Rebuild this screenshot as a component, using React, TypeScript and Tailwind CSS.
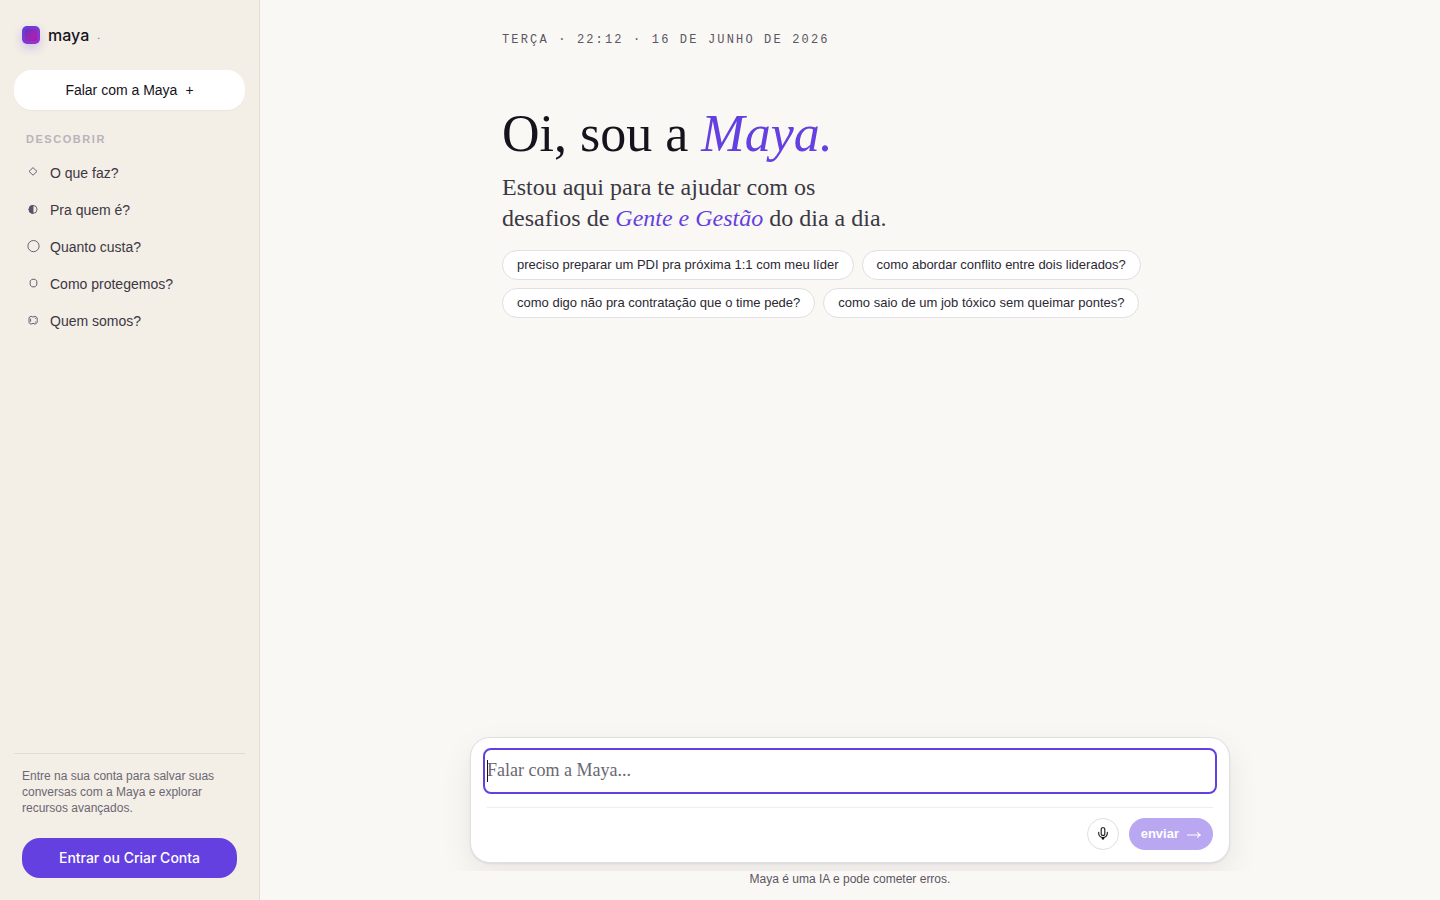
import React, { useState } from 'react';

const topics = [
  { icon: 'diamond', label: 'O que faz?' },
  { icon: 'half', label: 'Pra quem é?' },
  { icon: 'circle', label: 'Quanto custa?' },
  { icon: 'octagon', label: 'Como protegemos?' },
  { icon: 'benzene', label: 'Quem somos?' },
];

const suggestions = [
  'preciso preparar um PDI pra próxima 1:1 com meu líder',
  'como abordar conflito entre dois liderados?',
  'como digo não pra contratação que o time pede?',
  'como saio de um job tóxico sem queimar pontes?',
];

function TopicIcon({ name }: { name: string }) {
  return (
    <svg className="w-3.5 h-3.5 shrink-0 text-[#57536a]" viewBox="0 0 14 14" fill="none" stroke="currentColor" strokeWidth="0.9" aria-hidden="true">
      {name === 'diamond' && <path d="M7 1.6l4 3.8-4 3.8-4-3.8z" />}
      {name === 'half' && (
        <>
          <circle cx="7" cy="6.4" r="4" />
          <path d="M7 2.4a4 4 0 0 0 0 8z" fill="currentColor" />
        </>
      )}
      {name === 'circle' && <circle cx="7.5" cy="6.1" r="5.6" />}
      {name === 'octagon' && <path d="M5.9 2.3h3.2l1.7 1.7v4L9.1 9.8H5.9L4.2 8V4z" />}
      {name === 'benzene' && (
        <>
          <path d="M5 2.2l-2 1.4v5.2l2 1.4 2-.9 2 .9 2.2-1.6V3.8L9 2.2l-2 .9z" />
          <path d="M4.6 4.6v3.2M8.8 3.9l1 .7M8.8 8.5l1-.7" />
        </>
      )}
    </svg>
  );
}

function Sidebar() {
  return (
    <aside className="w-65 shrink-0 flex flex-col bg-[#f3eee6] border-r border-[#e0ddd8] px-3.5 pt-[23px] pb-5.5">
      <div className="flex items-center gap-2 px-2 h-6">
        <span className="w-4.5 h-4.5 p-0.75 rounded-[5px] bg-linear-135 from-[#5b3fd6] to-[#9a2fd0] shadow-[0_4px_10px_rgba(100,64,224,0.25)]">
          <span className="block w-full h-full rounded-[3px] bg-linear-135 from-[#6a2cc0] to-[#c000a8]"></span>
        </span>
        <span className="font-[Inter,sans-serif] text-base font-medium text-[#15131c]">maya</span>
        <span className="text-[10px] text-[#6440e0]">.</span>
      </div>

      <button
        type="button"
        className="mt-[23px] h-10 flex items-center justify-center gap-2 rounded-[18px] bg-white text-sm text-[#15131c] shadow-[0_1px_1px_rgba(0,0,0,0.04)] cursor-pointer"
      >
        <span>Falar com a Maya</span>
        <span>+</span>
      </button>

      <h2 className="mt-[21px] px-3 text-[11px] leading-4 font-semibold tracking-[0.14em] text-[#b9b3bb]">DESCOBRIR</h2>
      <nav className="mt-[7px]">
        <ul>
          {topics.map(topic => (
            <li key={topic.label}>
              <a href="#" className="flex items-center gap-2.5 h-[37px] px-3 text-sm text-[#3b3844]">
                <TopicIcon name={topic.icon} />
                <span>{topic.label}</span>
              </a>
            </li>
          ))}
        </ul>
      </nav>

      <div className="mt-auto pt-3.5 px-2 border-t border-[#e0ddd8]">
        <p className="text-xs leading-4 text-[#6b6774]">
          Entre na sua conta para salvar suas conversas com a Maya e explorar recursos avançados.
        </p>
        <button
          type="button"
          className="mt-5.5 w-full h-10 rounded-[18px] bg-[#6440e0] font-[Inter,sans-serif] text-sm font-medium text-white cursor-pointer"
        >
          Entrar ou Criar Conta
        </button>
      </div>
    </aside>
  );
}

function Composer() {
  const [message, setMessage] = useState('');

  return (
    <form
      onSubmit={e => e.preventDefault()}
      className="px-4 pt-3.5 pb-3 rounded-[20px] bg-white border border-[#e0dfe1] shadow-[0_1px_2px_rgba(20,16,30,0.08),0_12px_32px_rgba(20,16,30,0.08)]"
    >
      <div className="relative">
        <textarea
          autoFocus
          rows={1}
          aria-label="Falar com a Maya"
          placeholder="Falar com a Maya..."
          value={message}
          onChange={e => setMessage(e.target.value)}
          className="block w-full h-[38px] py-1.5 resize-none rounded-sm font-['Liberation_Serif',serif] text-lg leading-6 text-[#15131c] placeholder:text-[#6b6774] placeholder-shown:caret-transparent outline-2 outline-offset-2 outline-[#6440e0]"
        />
        {/* steady caret while the field is empty */}
        {!message && <span className="absolute left-0 top-2 w-px h-5.5 bg-[#15131c] pointer-events-none" />}
      </div>
      <div className="mt-[17px] pt-2.5 flex items-center justify-end gap-2.5 border-t border-[#eeedef]">
        <button
          type="button"
          aria-label="Gravar áudio"
          className="w-8 h-8 flex items-center justify-center rounded-full bg-white border border-[#e0dfe1] text-[#15131c] cursor-pointer"
        >
          <svg className="w-3.5 h-3.5" viewBox="0 0 14 14" fill="none" stroke="currentColor" strokeWidth="1.1" strokeLinecap="round">
            <rect x="5.2" y="0.8" width="3.6" height="7.6" rx="1.2" />
            <path d="M2.7 5.4v1.2a4.3 4 0 0 0 8.6 0V5.4M7 10.8v1.6M6.2 11.4h1.6" />
          </svg>
        </button>
        <button
          type="submit"
          disabled={!message}
          className="h-8 px-3 flex items-center gap-2 rounded-full bg-[#6440e0] text-[13px] font-semibold text-white disabled:bg-[#b9a8f1]"
        >
          <span>enviar</span>
          <svg className="w-3.5 h-3.5" viewBox="0 0 14 14" fill="none" stroke="currentColor" strokeWidth="1.1" aria-hidden="true">
            <path d="M0 8h13.4M10.4 5.3q1 2 3 2.7q-2 .7-3 2.7" />
          </svg>
        </button>
      </div>
    </form>
  );
}

export default function App() {
  return (
    <div className="min-h-screen flex bg-[#faf8f4] font-['Liberation_Sans',sans-serif]">
      <Sidebar />
      <main className="flex-1 min-w-0 flex flex-col">
        <div className="w-full max-w-[760px] mx-auto px-8 pt-8">
          <p className="font-['Liberation_Mono',monospace] text-xs leading-4 tracking-[0.18em] text-[#5a5664]">
            TERÇA · 22:12 · 16 DE JUNHO DE 2026
          </p>
          <h1 className="mt-14 font-['Liberation_Serif',serif] text-[52px] leading-[60px] text-[#15131c]">
            Oi, sou a <em className="text-[#6440e0]">Maya.</em>
          </h1>
          <p className="mt-2 max-w-105 font-['Liberation_Serif',serif] text-2xl leading-[31px] text-[#3b3844]">
            Estou aqui para te ajudar com os
            <br />
            desafios de <em className="text-[#6440e0]">Gente e Gestão</em> do dia a dia.
          </p>
          <div className="mt-4 flex flex-wrap gap-2">
            {suggestions.map(text => (
              <button
                key={text}
                type="button"
                className="h-[30px] px-3.5 rounded-full bg-white border border-[#e0dfe1] text-[13px] text-[#2b2833] cursor-pointer"
              >
                {text}
              </button>
            ))}
          </div>
        </div>

        <div className="mt-auto w-full">
          <div className="max-w-[760px] mx-auto pb-2">
            <Composer />
          </div>
          <footer className="relative bg-[#faf8f4] pb-3 text-center text-xs leading-[17px] text-[#5a5664]">
            Maya é uma IA e pode cometer erros.
          </footer>
        </div>
      </main>
    </div>
  );
}
